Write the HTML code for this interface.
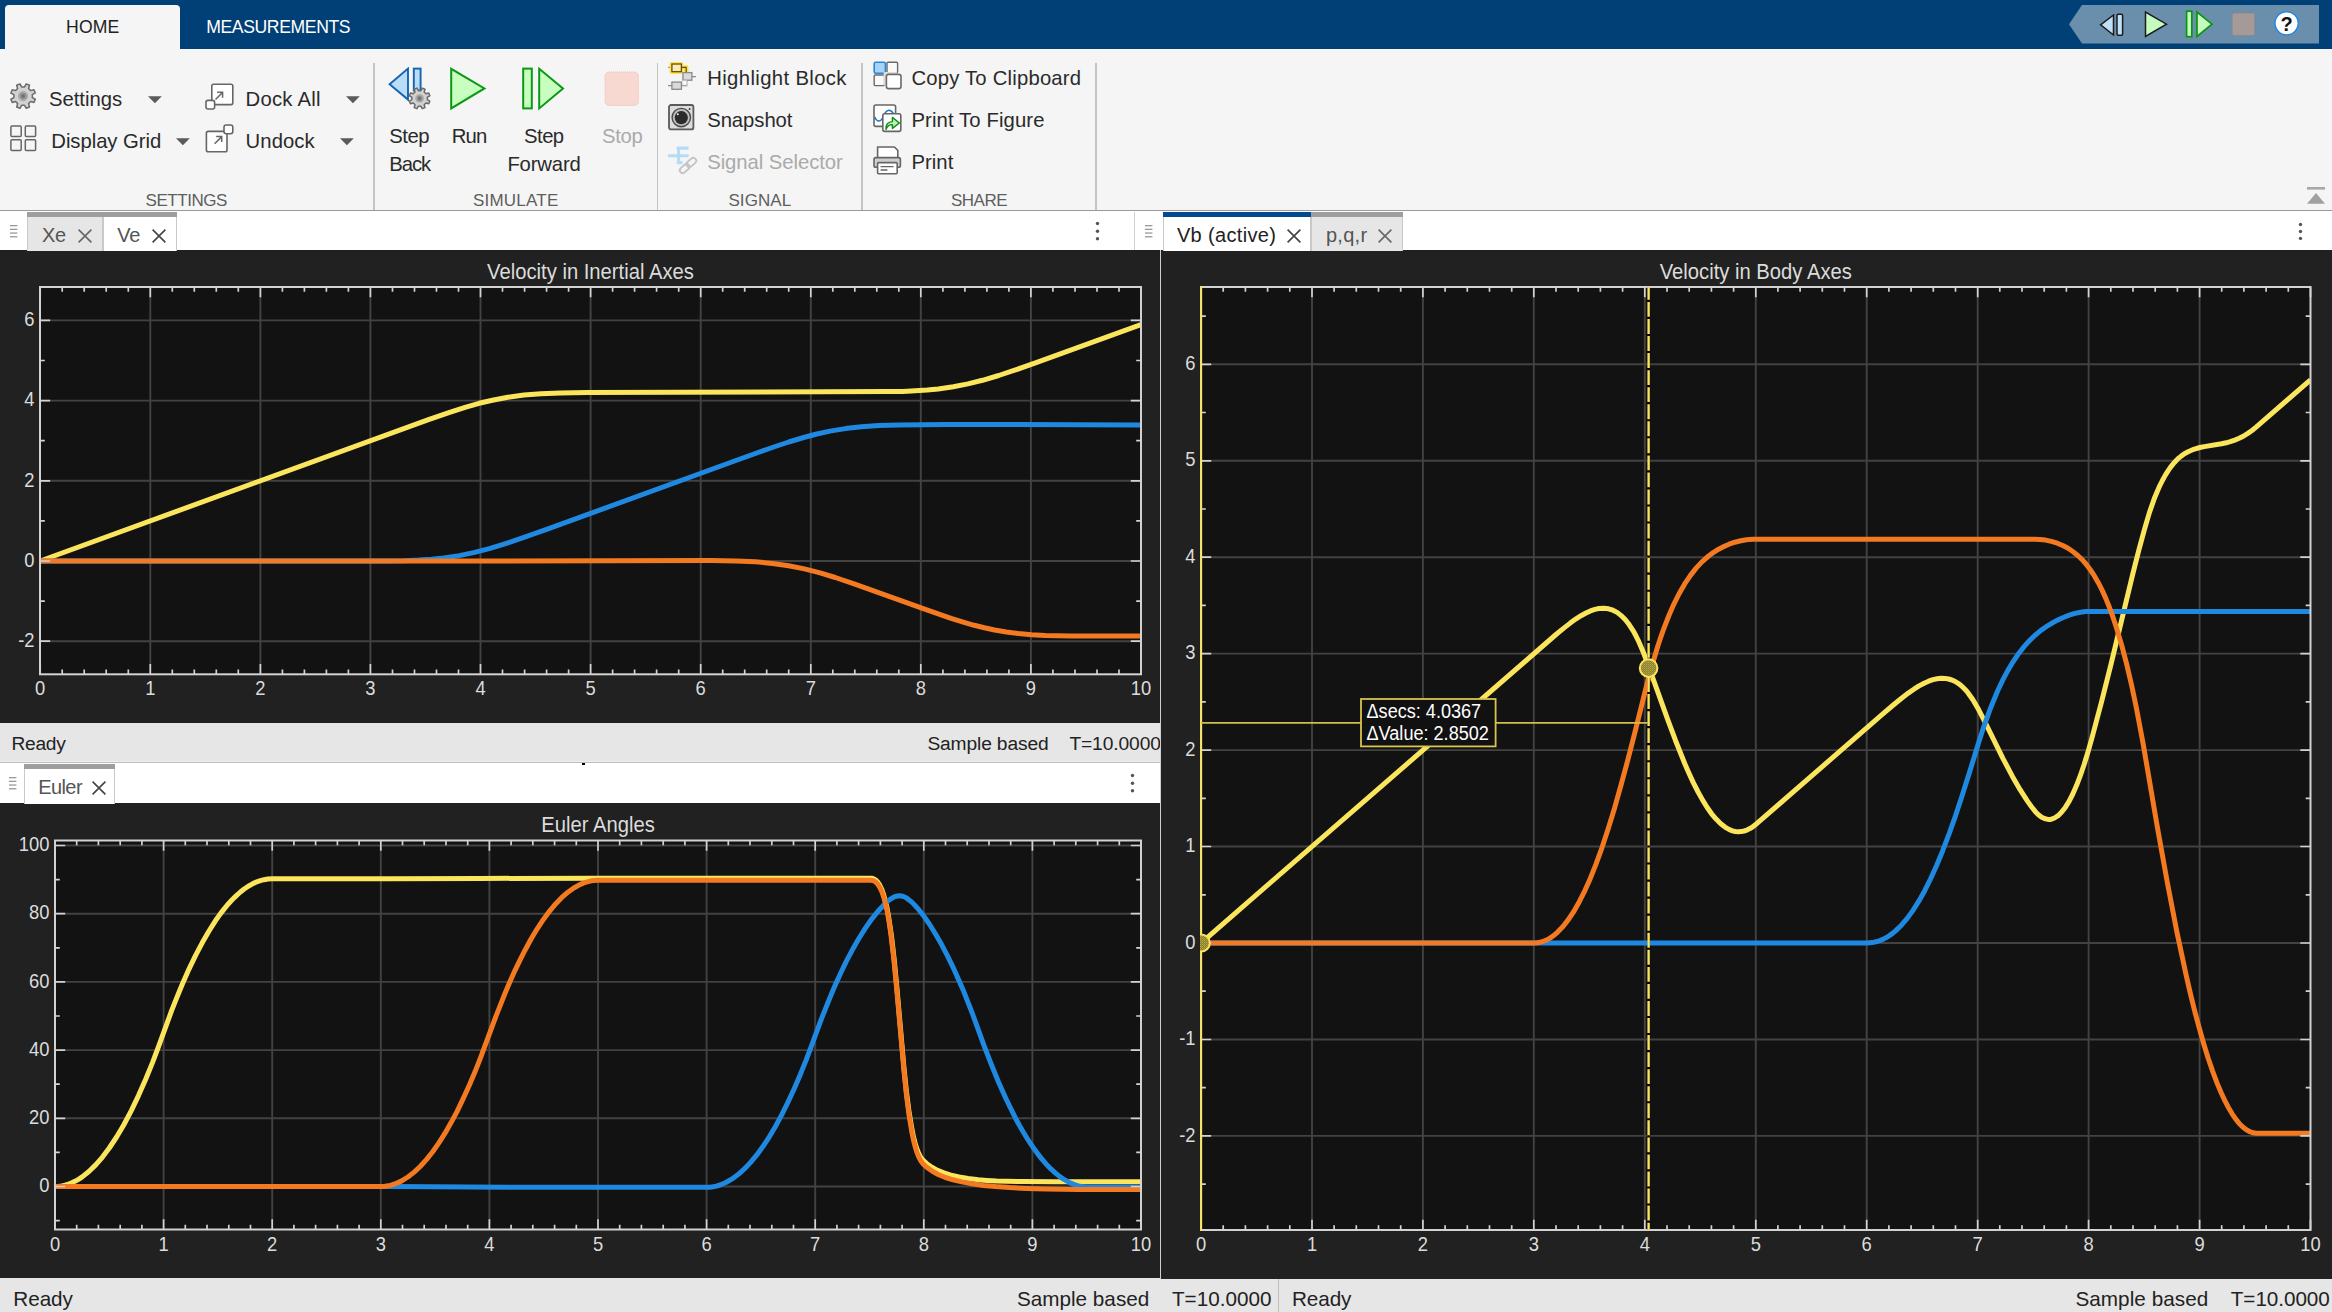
<!DOCTYPE html>
<html><head><meta charset="utf-8"><title>Scope</title><style>
html,body{margin:0;padding:0;background:#212121;}
body{width:2332px;height:1312px;position:relative;overflow:hidden;font-family:"Liberation Sans",sans-serif;}
.b{position:absolute;display:block;}
.t{position:absolute;white-space:nowrap;font-family:"Liberation Sans",sans-serif;}
svg text{font-family:"Liberation Sans",sans-serif;}
</style></head><body>
<div class="b" style="left:0px;top:0px;width:2332px;height:49px;background:#004076;"></div>
<div class="b" style="left:0px;top:49px;width:2332px;height:161.5px;background:#f5f5f5;"></div>
<div class="b" style="left:0px;top:210px;width:2332px;height:1.3px;background:#979797;"></div>
<div class="b" style="left:5px;top:5px;width:175px;height:45px;background:#f5f5f5;border-radius:4px 4px 0 0;"></div>
<div class="t " style="left:66.0px;top:19.4px;font-size:17.6px;line-height:17.6px;color:#222;letter-spacing:0.17px;">HOME</div>
<div class="t " style="left:206.2px;top:19.4px;font-size:17.6px;line-height:17.6px;color:#fff;letter-spacing:-0.38px;">MEASUREMENTS</div>
<svg class="b" style="left:2069px;top:5px;" width="250" height="39" viewBox="0 0 250 39"><path d="M13,0 H250 V38.6 H13 L0,19.3 Z" fill="#6a8fad"/>
<path d="M31.6,19.8 L44.5,10 V30 Z" fill="#bfe0f7" stroke="#1c1c1c" stroke-width="1.5" stroke-linejoin="miter"/>
<rect x="48" y="9.3" width="5.6" height="21" rx="1.2" fill="#bfe0f7" stroke="#1c1c1c" stroke-width="1.5"/>
<path d="M76.5,7 V31.5 L97.5,19.2 Z" fill="#c6fbc0" stroke="#1c1c1c" stroke-width="1.5"/>
<rect x="117.6" y="6.2" width="5.2" height="25.5" fill="#c6fbc0" stroke="#0a9410" stroke-width="1.7"/>
<path d="M128,7 V31.5 L143,19.2 Z" fill="#c6fbc0" stroke="#0a9410" stroke-width="1.7"/>
<rect x="163.2" y="8" width="22.5" height="22.5" rx="2" fill="#a59a97" stroke="#8a7f86" stroke-width="1" stroke-dasharray="1 1"/>
<circle cx="217.6" cy="18.3" r="11.6" fill="#fff" stroke="#1e88e5" stroke-width="1.4"/>
<text x="217.6" y="25.6" font-size="20" font-weight="bold" text-anchor="middle" fill="#111">?</text></svg>
<div class="b" style="left:373.25px;top:63px;width:1.5px;height:147px;background:#c4c4c4;"></div>
<div class="b" style="left:656.55px;top:63px;width:1.5px;height:147px;background:#c4c4c4;"></div>
<div class="b" style="left:861.25px;top:63px;width:1.5px;height:147px;background:#c4c4c4;"></div>
<div class="b" style="left:1095.05px;top:63px;width:1.5px;height:147px;background:#c4c4c4;"></div>
<div class="t " style="left:48.9px;top:88.6px;font-size:20.3px;line-height:20.3px;color:#2a2a2a;letter-spacing:-0.01px;">Settings</div>
<div class="t " style="left:51.3px;top:131.0px;font-size:20.3px;line-height:20.3px;color:#2a2a2a;letter-spacing:-0.05px;">Display Grid</div>
<div class="t " style="left:245.6px;top:88.6px;font-size:20.3px;line-height:20.3px;color:#2a2a2a;letter-spacing:0.22px;">Dock All</div>
<div class="t " style="left:245.6px;top:131.0px;font-size:20.3px;line-height:20.3px;color:#2a2a2a;letter-spacing:0.06px;">Undock</div>
<div class="t " style="left:145.5px;top:191.6px;font-size:17px;line-height:17px;color:#5e5e5e;letter-spacing:-0.44px;">SETTINGS</div>
<div class="t " style="left:389.3px;top:125.8px;font-size:20.3px;line-height:20.3px;color:#2a2a2a;letter-spacing:-0.46px;">Step</div>
<div class="t " style="left:389.3px;top:153.9px;font-size:20.3px;line-height:20.3px;color:#2a2a2a;letter-spacing:-1.06px;">Back</div>
<div class="t " style="left:451.7px;top:125.8px;font-size:20.3px;line-height:20.3px;color:#2a2a2a;letter-spacing:-0.85px;">Run</div>
<div class="t " style="left:524.1px;top:125.8px;font-size:20.3px;line-height:20.3px;color:#2a2a2a;letter-spacing:-0.56px;">Step</div>
<div class="t " style="left:507.4px;top:153.9px;font-size:20.3px;line-height:20.3px;color:#2a2a2a;letter-spacing:-0.16px;">Forward</div>
<div class="t " style="left:602.0px;top:125.8px;font-size:20.3px;line-height:20.3px;color:#aaa;letter-spacing:-0.31px;">Stop</div>
<div class="t " style="left:472.9px;top:191.6px;font-size:17px;line-height:17px;color:#5e5e5e;letter-spacing:0.23px;">SIMULATE</div>
<div class="t " style="left:707.2px;top:67.6px;font-size:20.3px;line-height:20.3px;color:#2a2a2a;letter-spacing:0.37px;">Highlight Block</div>
<div class="t " style="left:707.2px;top:109.7px;font-size:20.3px;line-height:20.3px;color:#2a2a2a;letter-spacing:-0.06px;">Snapshot</div>
<div class="t " style="left:707.2px;top:151.7px;font-size:20.3px;line-height:20.3px;color:#aaa;letter-spacing:-0.06px;">Signal Selector</div>
<div class="t " style="left:728.4px;top:191.6px;font-size:17px;line-height:17px;color:#5e5e5e;letter-spacing:0.09px;">SIGNAL</div>
<div class="t " style="left:911.4px;top:67.6px;font-size:20.3px;line-height:20.3px;color:#2a2a2a;letter-spacing:0.20px;">Copy To Clipboard</div>
<div class="t " style="left:911.4px;top:109.7px;font-size:20.3px;line-height:20.3px;color:#2a2a2a;letter-spacing:0.11px;">Print To Figure</div>
<div class="t " style="left:911.4px;top:151.7px;font-size:20.3px;line-height:20.3px;color:#2a2a2a;letter-spacing:0.05px;">Print</div>
<div class="t " style="left:951.0px;top:191.6px;font-size:17px;line-height:17px;color:#5e5e5e;letter-spacing:-0.51px;">SHARE</div>
<svg class="b" style="left:148px;top:96px;" width="14" height="8" viewBox="0 0 14 8"><path d="M0,0.3 H13.8 L6.9,7.3 Z" fill="#5a5a5a"/></svg>
<svg class="b" style="left:176.2px;top:138.2px;" width="14" height="8" viewBox="0 0 14 8"><path d="M0,0.3 H13.8 L6.9,7.3 Z" fill="#5a5a5a"/></svg>
<svg class="b" style="left:346.2px;top:96px;" width="14" height="8" viewBox="0 0 14 8"><path d="M0,0.3 H13.8 L6.9,7.3 Z" fill="#5a5a5a"/></svg>
<svg class="b" style="left:340.2px;top:138.2px;" width="14" height="8" viewBox="0 0 14 8"><path d="M0,0.3 H13.8 L6.9,7.3 Z" fill="#5a5a5a"/></svg>
<svg class="b" style="left:8px;top:81px;" width="30" height="30" viewBox="0 0 30 30"><path d="M24.17,12.92 L27.57,13.32 L27.57,16.88 L24.17,17.28 L23.05,19.97 L25.18,22.67 L22.67,25.18 L19.97,23.05 L17.28,24.17 L16.88,27.57 L13.32,27.57 L12.92,24.17 L10.23,23.05 L7.53,25.18 L5.02,22.67 L7.15,19.97 L6.03,17.28 L2.63,16.88 L2.63,13.32 L6.03,12.92 L7.15,10.23 L5.02,7.53 L7.53,5.02 L10.23,7.15 L12.92,6.03 L13.32,2.63 L16.88,2.63 L17.28,6.03 L19.97,7.15 L22.67,5.02 L25.18,7.53 L23.05,10.23Z" fill="#d2d2d2" stroke="#6b6b6b" stroke-width="1.5" stroke-linejoin="round" transform="rotate(22.5 15.1 15.1)"/><circle cx="15.1" cy="15.1" r="5.29" fill="#b0b0b0"/><circle cx="15.1" cy="15.1" r="3.40" fill="#8e8e8e"/><circle cx="15.1" cy="15.1" r="1.64" fill="#6e6e6e"/></svg>
<svg class="b" style="left:8px;top:123px;" width="32" height="32" viewBox="0 0 32 32"><rect x="2.9000000000000004" y="2.9000000000000057" width="10.3" height="10.6" rx="1" fill="none" stroke="#666" stroke-width="1.5"/><rect x="2.9000000000000004" y="16.80000000000001" width="10.3" height="10.6" rx="1" fill="none" stroke="#666" stroke-width="1.5"/><rect x="17.3" y="2.9000000000000057" width="10.3" height="10.6" rx="1" fill="none" stroke="#666" stroke-width="1.5"/><rect x="17.3" y="16.80000000000001" width="10.3" height="10.6" rx="1" fill="none" stroke="#666" stroke-width="1.5"/></svg>
<svg class="b" style="left:205px;top:82px;" width="32" height="30" viewBox="0 0 32 30"><rect x="6.8" y="2.3" width="21" height="20.3" rx="1.8" fill="#fff" stroke="#666" stroke-width="1.6"/>
<rect x="1" y="18.4" width="8.6" height="8.6" rx="2" fill="#fff" stroke="#666" stroke-width="1.6"/>
<path d="M10.5,17.5 L17.2,10.8 M12.2,10.3 H17.6 V15.8" fill="none" stroke="#666" stroke-width="1.5"/></svg>
<svg class="b" style="left:205px;top:124px;" width="32" height="30" viewBox="0 0 32 30"><rect x="1.4" y="7.4" width="20.6" height="20.3" rx="1.8" fill="#fff" stroke="#666" stroke-width="1.6"/>
<rect x="19" y="1" width="8.8" height="8.8" rx="2.2" fill="#fff" stroke="#666" stroke-width="1.6"/>
<path d="M9.6,19.8 L16.3,13.1 M11.2,12.6 H16.7 V18.1" fill="none" stroke="#666" stroke-width="1.5"/></svg>
<svg class="b" style="left:388px;top:67px;" width="46" height="46" viewBox="0 0 46 46"><path d="M1.6,17.3 L20,1.6 V32.6 Z" fill="#b9ddf6" stroke="#1663b3" stroke-width="1.9" stroke-linejoin="miter"/>
<rect x="25.8" y="1.6" width="6.8" height="22" fill="#b9ddf6" stroke="#1663b3" stroke-width="1.9"/><path d="M39.23,29.57 L42.09,29.91 L42.09,32.89 L39.23,33.23 L38.29,35.50 L40.08,37.76 L37.96,39.88 L35.70,38.09 L33.43,39.03 L33.09,41.89 L30.11,41.89 L29.77,39.03 L27.50,38.09 L25.24,39.88 L23.12,37.76 L24.91,35.50 L23.97,33.23 L21.11,32.89 L21.11,29.91 L23.97,29.57 L24.91,27.30 L23.12,25.04 L25.24,22.92 L27.50,24.71 L29.77,23.77 L30.11,20.91 L33.09,20.91 L33.43,23.77 L35.70,24.71 L37.96,22.92 L40.08,25.04 L38.29,27.30Z" fill="#d2d2d2" stroke="#6b6b6b" stroke-width="1.5" stroke-linejoin="round" transform="rotate(22.5 31.6 31.4)"/><circle cx="31.6" cy="31.4" r="4.45" fill="#b0b0b0"/><circle cx="31.6" cy="31.4" r="2.86" fill="#8e8e8e"/><circle cx="31.6" cy="31.4" r="1.38" fill="#6e6e6e"/></svg>
<svg class="b" style="left:450.3px;top:67px;" width="38" height="44" viewBox="0 0 38 44"><path d="M1.2,1.8 V41.4 L34.4,21.4 Z" fill="#c8ffc1" stroke="#0b9913" stroke-width="2" stroke-linejoin="miter"/></svg>
<svg class="b" style="left:522px;top:67px;" width="44" height="44" viewBox="0 0 44 44"><rect x="1.2" y="1.6" width="8.6" height="39.8" fill="#c8ffc1" stroke="#0b9913" stroke-width="2"/>
<path d="M17.2,1.8 V41.4 L41,21.4 Z" fill="#c8ffc1" stroke="#0b9913" stroke-width="2" stroke-linejoin="miter"/></svg>
<svg class="b" style="left:604.3px;top:71.4px;" width="36" height="36" viewBox="0 0 36 36"><rect x="1" y="1" width="33.4" height="33.4" rx="4" fill="#f8d9d1" stroke="#e8bfae" stroke-width="1" stroke-dasharray="1 1"/></svg>
<svg class="b" style="left:667px;top:61px;" width="31" height="31" viewBox="0 0 31 31"><path d="M1.1,6.4 H5 M1.1,24.7 H5 M24.9,15.7 H29 M14.4,24.7 H19.7 V19.2" fill="none" stroke="#8a8a8a" stroke-width="1.3"/>
<rect x="2.5" y="1.1" width="13.8" height="11.9" rx="2" fill="#fbe44d"/>
<path d="M14.4,6.4 H19.2 V11.4" fill="none" stroke="#fbe44d" stroke-width="4.6" stroke-linejoin="round" stroke-linecap="round"/>
<path d="M14.4,6.4 H19.2 V11.6" fill="none" stroke="#6b4a12" stroke-width="1.2"/>
<rect x="4.9" y="3" width="9.5" height="7.7" fill="#f5eeb0" stroke="#6b4a12" stroke-width="1.3"/>
<rect x="15.9" y="11.6" width="9" height="7.6" fill="#dadada" stroke="#8a8a8a" stroke-width="1.3"/>
<rect x="4.9" y="21.1" width="9.5" height="7.2" fill="#dadada" stroke="#8a8a8a" stroke-width="1.3"/>
<rect x="15.8" y="19.8" width="3.9" height="4.2" fill="#fff" stroke="#d5d5d5" stroke-width="0.8"/></svg>
<svg class="b" style="left:668px;top:104px;" width="27" height="27" viewBox="0 0 27 27"><rect x="1" y="1" width="24.4" height="24.4" rx="2" fill="#dcdcdc" stroke="#5a5a5a" stroke-width="1.8"/>
<circle cx="13.3" cy="13.6" r="9.2" fill="#bdbdbd" stroke="#4a4a4a" stroke-width="1.4"/>
<circle cx="13.3" cy="13.6" r="6.6" fill="#2b2b2b"/>
<circle cx="9.8" cy="10.2" r="1" fill="#eee"/>
<circle cx="21.6" cy="5" r="0.9" fill="#333"/></svg>
<svg class="b" style="left:667px;top:145.5px;" width="31" height="30" viewBox="0 0 31 30"><path d="M9.7,2.1 H21.6 M1.1,9.7 H21.6 M9.7,16.6 H15.4 M11.6,0.9 V17.6" fill="none" stroke="#b5dcf5" stroke-width="3.1"/>
<g transform="rotate(-42 21 19.5)" fill="none" stroke="#c4c4c4" stroke-width="1.9">
<rect x="11" y="16.6" width="11" height="5.8" rx="2.9"/>
<rect x="20" y="16.6" width="11" height="5.8" rx="2.9"/>
</g></svg>
<svg class="b" style="left:872.8px;top:61.4px;" width="30" height="30" viewBox="0 0 30 30"><rect x="1.2" y="1.2" width="11.2" height="11" rx="1.5" fill="#a9d3f3" stroke="#2b87db" stroke-width="1.6"/>
<rect x="14" y="1.2" width="10.6" height="10.6" rx="1" fill="#fafafa" stroke="#6a6a6a" stroke-width="1.4"/>
<rect x="1.2" y="14" width="10.4" height="10.6" rx="1" fill="#fafafa" stroke="#6a6a6a" stroke-width="1.4"/>
<rect x="10.6" y="11" width="13.6" height="13.6" rx="1" fill="#dcdcdc"/>
<rect x="13.4" y="13.4" width="14.6" height="14.2" rx="2.2" fill="#fff" stroke="#6a6a6a" stroke-width="1.6"/></svg>
<svg class="b" style="left:873.2px;top:104.2px;" width="30" height="30" viewBox="0 0 30 30"><rect x="1" y="1" width="21.6" height="21.4" rx="1.8" fill="#fff" stroke="#666" stroke-width="1.6"/>
<path d="M1.8,13 C4,18.5 8,18.5 10.5,12 S17,4.5 20.5,9.5" fill="none" stroke="#1e73c8" stroke-width="1.5"/>
<rect x="9.8" y="9.8" width="18" height="17.6" rx="1.8" fill="#fff" stroke="#666" stroke-width="1.6"/>
<path d="M13,25.5 C12.6,20.5 15,17.8 19.4,17.6 V13.4 L26.4,19 L19.4,24.4 V20.6 C16.2,20.6 14.2,22.4 13,25.5 Z" fill="#bdf3b4" stroke="#108a16" stroke-width="1.4" stroke-linejoin="round"/></svg>
<svg class="b" style="left:873.2px;top:146.1px;" width="30" height="30" viewBox="0 0 30 30"><path d="M4.6,12 V1 H21.4 L24.8,4.4 V12" fill="#fff" stroke="#666" stroke-width="1.6" stroke-linejoin="round"/>
<rect x="1" y="11.6" width="26.4" height="9.6" rx="1.8" fill="#cfcfcf" stroke="#666" stroke-width="1.6"/>
<rect x="4.6" y="16.6" width="19.6" height="11.2" rx="1" fill="#fff" stroke="#666" stroke-width="1.6"/>
<path d="M7.6,20.6 H20.6 M7.6,24 H14.4" stroke="#666" stroke-width="1.3"/></svg>
<svg class="b" style="left:2306.7px;top:187.3px;" width="18" height="17" viewBox="0 0 18 17"><rect x="0" y="0" width="18" height="2.6" fill="#a8a8a8"/><path d="M9,6 L18,16.8 H0 Z" fill="#a0a0a0"/></svg>
<div class="b" style="left:0px;top:210.5px;width:2332px;height:39.5px;background:#fff;"></div>
<div class="b" style="left:0px;top:210px;width:2332px;height:1.3px;background:#9a9a9a;"></div>
<svg class="b" style="left:10.3px;top:225.4px;" width="8" height="13" viewBox="0 0 8 13"><rect x="0" y="0.0" width="7.4" height="1.3" fill="#9a9a9a"/><rect x="0" y="3.7" width="7.4" height="1.3" fill="#9a9a9a"/><rect x="0" y="7.4" width="7.4" height="1.3" fill="#9a9a9a"/><rect x="0" y="11.1" width="7.4" height="1.3" fill="#9a9a9a"/></svg>
<div class="b" style="left:26.6px;top:212.3px;width:76.0px;height:38.89999999999998px;background:#e6e6e6;border-left:1px solid #c9c9c9;border-right:1px solid #c9c9c9;box-sizing:border-box;"></div>
<div class="b" style="left:26.6px;top:212.3px;width:76.0px;height:4.6px;background:#a09d9d;"></div>
<div class="t " style="left:42.0px;top:225.2px;font-size:20px;line-height:20px;color:#555;letter-spacing:-0.23px;">Xe</div>
<svg class="b" style="left:78px;top:229.3px;" width="14.4" height="14.4" viewBox="0 0 14.4 14.4"><path d="M0.6,0.6 L13.4,13.4 M13.4,0.6 L0.6,13.4" stroke="#666" stroke-width="1.6" fill="none"/></svg>
<div class="b" style="left:102.6px;top:212.3px;width:74.1px;height:38.89999999999998px;background:#fff;border-left:1px solid #c9c9c9;border-right:1px solid #c9c9c9;box-sizing:border-box;"></div>
<div class="b" style="left:102.6px;top:212.3px;width:74.1px;height:4.6px;background:#a09d9d;"></div>
<div class="t " style="left:117.2px;top:225.2px;font-size:20px;line-height:20px;color:#555;letter-spacing:-0.13px;">Ve</div>
<svg class="b" style="left:151.6px;top:229.3px;" width="14.4" height="14.4" viewBox="0 0 14.4 14.4"><path d="M0.6,0.6 L13.4,13.4 M13.4,0.6 L0.6,13.4" stroke="#444" stroke-width="1.6" fill="none"/></svg>
<svg class="b" style="left:1094.7px;top:221.2px;" width="5" height="20.200000000000017" viewBox="0 0 5 20.200000000000017"><circle cx="2.5" cy="2.5" r="1.7" fill="#555"/><circle cx="2.5" cy="10.2" r="1.7" fill="#555"/><circle cx="2.5" cy="17.7" r="1.7" fill="#555"/></svg>
<div class="b" style="left:1134px;top:212px;width:1px;height:38px;background:#d0d0d0;"></div>
<svg class="b" style="left:1145.2px;top:225.4px;" width="8" height="13" viewBox="0 0 8 13"><rect x="0" y="0.0" width="7.4" height="1.3" fill="#9a9a9a"/><rect x="0" y="3.7" width="7.4" height="1.3" fill="#9a9a9a"/><rect x="0" y="7.4" width="7.4" height="1.3" fill="#9a9a9a"/><rect x="0" y="11.1" width="7.4" height="1.3" fill="#9a9a9a"/></svg>
<div class="b" style="left:1162.9px;top:212.3px;width:148.0999999999999px;height:39.099999999999994px;background:#fff;border-left:1px solid #c9c9c9;border-right:1px solid #c9c9c9;box-sizing:border-box;"></div>
<div class="b" style="left:1162.9px;top:212.3px;width:148.0999999999999px;height:4.6px;background:#004a8f;"></div>
<div class="t " style="left:1176.9px;top:225.2px;font-size:20px;line-height:20px;color:#222;letter-spacing:0.35px;">Vb (active)</div>
<svg class="b" style="left:1286.8px;top:229.3px;" width="14.4" height="14.4" viewBox="0 0 14.4 14.4"><path d="M0.6,0.6 L13.4,13.4 M13.4,0.6 L0.6,13.4" stroke="#444" stroke-width="1.6" fill="none"/></svg>
<div class="b" style="left:1311px;top:212.3px;width:91.5px;height:39.099999999999994px;background:#e6e6e6;border-left:1px solid #c9c9c9;border-right:1px solid #c9c9c9;box-sizing:border-box;"></div>
<div class="b" style="left:1311px;top:212.3px;width:91.5px;height:4.6px;background:#a09d9d;"></div>
<div class="t " style="left:1325.9px;top:225.2px;font-size:20px;line-height:20px;color:#555;letter-spacing:0.31px;">p,q,r</div>
<svg class="b" style="left:1377.8px;top:229.3px;" width="14.4" height="14.4" viewBox="0 0 14.4 14.4"><path d="M0.6,0.6 L13.4,13.4 M13.4,0.6 L0.6,13.4" stroke="#666" stroke-width="1.6" fill="none"/></svg>
<svg class="b" style="left:2297.8px;top:222.0px;" width="5" height="18.900000000000006" viewBox="0 0 5 18.900000000000006"><circle cx="2.5" cy="2.5" r="1.7" fill="#555"/><circle cx="2.5" cy="9.5" r="1.7" fill="#555"/><circle cx="2.5" cy="16.4" r="1.7" fill="#555"/></svg>
<div class="b" style="left:0px;top:722.5px;width:1160px;height:39.5px;background:#e6e6e6;"></div>
<div class="b" style="left:0px;top:761.3px;width:1160px;height:0.8px;background:#f0f0f0;"></div>
<div class="b" style="left:0px;top:762px;width:1160px;height:1px;background:#bcbcbc;"></div>
<div class="t " style="left:11.4px;top:734.1px;font-size:19.2px;line-height:19.2px;color:#222;letter-spacing:-0.24px;">Ready</div>
<div class="t " style="left:927.4px;top:734.1px;font-size:19.2px;line-height:19.2px;color:#222;letter-spacing:-0.13px;">Sample based</div>
<div class="b" style="left:1060px;top:722.5px;width:100px;height:39px;overflow:hidden"></div>
<div class="b" style="left:1060px;top:722.5px;width:100px;height:39px;overflow:hidden"><div class="t" style="left:9.4px;top:11.6px;font-size:19.2px;line-height:19.2px;color:#222;letter-spacing:-0.1px">T=10.0000</div></div>
<div class="b" style="left:0px;top:763px;width:1160px;height:39.5px;background:#fff;"></div>
<div class="b" style="left:582px;top:763px;width:3px;height:2px;background:#000;"></div>
<svg class="b" style="left:9.3px;top:777.4px;" width="8" height="13" viewBox="0 0 8 13"><rect x="0" y="0.0" width="7.4" height="1.3" fill="#9a9a9a"/><rect x="0" y="3.7" width="7.4" height="1.3" fill="#9a9a9a"/><rect x="0" y="7.4" width="7.4" height="1.3" fill="#9a9a9a"/><rect x="0" y="11.1" width="7.4" height="1.3" fill="#9a9a9a"/></svg>
<div class="b" style="left:24.2px;top:764.2px;width:90.6px;height:39.39999999999998px;background:#fff;border-left:1px solid #c9c9c9;border-right:1px solid #c9c9c9;box-sizing:border-box;"></div>
<div class="b" style="left:24.2px;top:764.2px;width:90.6px;height:4.6px;background:#a09d9d;"></div>
<div class="t " style="left:38.2px;top:777.1px;font-size:20px;line-height:20px;color:#555;letter-spacing:-0.58px;">Euler</div>
<svg class="b" style="left:91.7px;top:781.2px;" width="14.4" height="14.4" viewBox="0 0 14.4 14.4"><path d="M0.6,0.6 L13.4,13.4 M13.4,0.6 L0.6,13.4" stroke="#444" stroke-width="1.6" fill="none"/></svg>
<svg class="b" style="left:1129.5px;top:772.8px;" width="5" height="20.300000000000068" viewBox="0 0 5 20.300000000000068"><circle cx="2.5" cy="2.5" r="1.7" fill="#555"/><circle cx="2.5" cy="10.2" r="1.7" fill="#555"/><circle cx="2.5" cy="17.8" r="1.7" fill="#555"/></svg>
<div class="b" style="left:0px;top:1277.6px;width:1161px;height:34.4px;background:#e6e6e6;"></div>
<div class="b" style="left:1161px;top:1278.8px;width:1171px;height:33.2px;background:#e6e6e6;"></div>
<div class="b" style="left:1277.6px;top:1279px;width:1px;height:33px;background:#bdbdbd;"></div>
<div class="t " style="left:13.3px;top:1288.8px;font-size:20.7px;line-height:20.7px;color:#222;letter-spacing:-0.05px;">Ready</div>
<div class="t " style="left:1016.9px;top:1288.8px;font-size:20.7px;line-height:20.7px;color:#222;letter-spacing:0.01px;">Sample based</div>
<div class="t " style="left:1171.9px;top:1288.8px;font-size:20.7px;line-height:20.7px;color:#222;letter-spacing:0.02px;">T=10.0000</div>
<div class="t " style="left:1292.0px;top:1288.8px;font-size:20.7px;line-height:20.7px;color:#222;letter-spacing:-0.09px;">Ready</div>
<div class="t " style="left:2075.4px;top:1288.8px;font-size:20.7px;line-height:20.7px;color:#222;letter-spacing:0.05px;">Sample based</div>
<div class="t " style="left:2230.8px;top:1288.8px;font-size:20.7px;line-height:20.7px;color:#222;letter-spacing:-0.06px;">T=10.0000</div>
<div class="b" style="left:1160px;top:250px;width:1px;height:1029px;background:#cfcfcf;"></div>
<svg class="b" style="left:0;top:250px" width="1160" height="472.5" viewBox="0 250 1160 472.5"><rect x="40" y="287" width="1101" height="387.29999999999995" fill="#121212"/><path d="M150.3,287V674.3M260.4,287V674.3M370.4,287V674.3M480.5,287V674.3M590.6,287V674.3M700.7,287V674.3M810.8,287V674.3M920.8,287V674.3M1030.9,287V674.3M40,320.4H1141M40,400.6H1141M40,480.8H1141M40,561.0H1141M40,641.2H1141" stroke="#424242" stroke-width="1.9" fill="none"/><clipPath id="c40_287"><rect x="40" y="287" width="1101" height="387.29999999999995"/></clipPath><clipPath id="c40_287m"><rect x="39" y="286" width="1103" height="389.29999999999995"/></clipPath><g clip-path="url(#c40_287)"><path d="M40.2,561.0 428.5,419.6 448.9,412.6 465.1,407.3 479.1,403.3 492.4,400.2 507.8,397.3 524.0,395.1 541.1,393.7 560.3,392.9 587.3,392.6 888.4,391.6 902.7,391.4 915.3,390.8 927.2,390.0 938.2,388.9 953.3,386.8 967.9,383.9 982.5,380.3 998.7,375.5 1014.7,370.2 1034.8,363.1 1141.0,324.5" stroke="#fbe55c" stroke-width="5.0" fill="none" stroke-linejoin="round"/><path d="M40.2,561.0 388.3,561.0 404.6,560.7 418.6,560.1 431.5,559.2 443.6,558.0 459.3,555.6 474.7,552.4 490.2,548.4 508.0,542.8 524.6,537.2 546.6,529.4 737.3,460.0 770.9,448.0 788.7,442.0 803.6,437.5 816.8,434.0 830.0,431.1 845.4,428.6 861.4,426.8 878.7,425.6 898.8,425.0 945.3,424.5 996.2,424.4 1141.0,425.1" stroke="#1f88e0" stroke-width="5.0" fill="none" stroke-linejoin="round"/><path d="M40.2,561.0 446.7,561.0 711.4,560.6 735.9,560.9 755.4,561.8 772.5,563.4 788.7,565.7 804.4,568.9 820.1,572.9 835.3,577.5 853.4,583.6 926.1,609.7 951.1,618.3 963.2,622.1 974.2,625.3 984.4,627.8 994.6,630.0 1006.4,632.0 1018.5,633.6 1031.5,634.8 1045.2,635.5 1071.4,636.1 1141.0,636.0" stroke="#f47a21" stroke-width="5.0" fill="none" stroke-linejoin="round"/></g><path d="M40.2,287v10.2M40.2,674.3v-10.2M62.2,287v4.8M62.2,674.3v-4.8M84.2,287v4.8M84.2,674.3v-4.8M106.2,287v4.8M106.2,674.3v-4.8M128.3,287v4.8M128.3,674.3v-4.8M150.3,287v10.2M150.3,674.3v-10.2M172.3,287v4.8M172.3,674.3v-4.8M194.3,287v4.8M194.3,674.3v-4.8M216.3,287v4.8M216.3,674.3v-4.8M238.3,287v4.8M238.3,674.3v-4.8M260.4,287v10.2M260.4,674.3v-10.2M282.4,287v4.8M282.4,674.3v-4.8M304.4,287v4.8M304.4,674.3v-4.8M326.4,287v4.8M326.4,674.3v-4.8M348.4,287v4.8M348.4,674.3v-4.8M370.4,287v10.2M370.4,674.3v-10.2M392.5,287v4.8M392.5,674.3v-4.8M414.5,287v4.8M414.5,674.3v-4.8M436.5,287v4.8M436.5,674.3v-4.8M458.5,287v4.8M458.5,674.3v-4.8M480.5,287v10.2M480.5,674.3v-10.2M502.5,287v4.8M502.5,674.3v-4.8M524.6,287v4.8M524.6,674.3v-4.8M546.6,287v4.8M546.6,674.3v-4.8M568.6,287v4.8M568.6,674.3v-4.8M590.6,287v10.2M590.6,674.3v-10.2M612.6,287v4.8M612.6,674.3v-4.8M634.6,287v4.8M634.6,674.3v-4.8M656.6,287v4.8M656.6,674.3v-4.8M678.7,287v4.8M678.7,674.3v-4.8M700.7,287v10.2M700.7,674.3v-10.2M722.7,287v4.8M722.7,674.3v-4.8M744.7,287v4.8M744.7,674.3v-4.8M766.7,287v4.8M766.7,674.3v-4.8M788.7,287v4.8M788.7,674.3v-4.8M810.8,287v10.2M810.8,674.3v-10.2M832.8,287v4.8M832.8,674.3v-4.8M854.8,287v4.8M854.8,674.3v-4.8M876.8,287v4.8M876.8,674.3v-4.8M898.8,287v4.8M898.8,674.3v-4.8M920.8,287v10.2M920.8,674.3v-10.2M942.9,287v4.8M942.9,674.3v-4.8M964.9,287v4.8M964.9,674.3v-4.8M986.9,287v4.8M986.9,674.3v-4.8M1008.9,287v4.8M1008.9,674.3v-4.8M1030.9,287v10.2M1030.9,674.3v-10.2M1052.9,287v4.8M1052.9,674.3v-4.8M1075.0,287v4.8M1075.0,674.3v-4.8M1097.0,287v4.8M1097.0,674.3v-4.8M1119.0,287v4.8M1119.0,674.3v-4.8M1141.0,287v10.2M1141.0,674.3v-10.2M40,320.4h10.2M1141,320.4h-10.2M40,400.6h10.2M1141,400.6h-10.2M40,480.8h10.2M1141,480.8h-10.2M40,561.0h10.2M1141,561.0h-10.2M40,641.2h10.2M1141,641.2h-10.2M40,360.5h4.8M1141,360.5h-4.8M40,440.7h4.8M1141,440.7h-4.8M40,520.9h4.8M1141,520.9h-4.8M40,601.1h4.8M1141,601.1h-4.8" stroke="#d2d2d2" stroke-width="1.7" fill="none"/><rect x="40" y="287" width="1101" height="387.29999999999995" fill="none" stroke="#d2d2d2" stroke-width="2"/><text transform="translate(40.2,695.3) scale(0.92,1)" font-size="20" text-anchor="middle" fill="#dcdcdc">0</text><text transform="translate(150.3,695.3) scale(0.92,1)" font-size="20" text-anchor="middle" fill="#dcdcdc">1</text><text transform="translate(260.4,695.3) scale(0.92,1)" font-size="20" text-anchor="middle" fill="#dcdcdc">2</text><text transform="translate(370.4,695.3) scale(0.92,1)" font-size="20" text-anchor="middle" fill="#dcdcdc">3</text><text transform="translate(480.5,695.3) scale(0.92,1)" font-size="20" text-anchor="middle" fill="#dcdcdc">4</text><text transform="translate(590.6,695.3) scale(0.92,1)" font-size="20" text-anchor="middle" fill="#dcdcdc">5</text><text transform="translate(700.7,695.3) scale(0.92,1)" font-size="20" text-anchor="middle" fill="#dcdcdc">6</text><text transform="translate(810.8,695.3) scale(0.92,1)" font-size="20" text-anchor="middle" fill="#dcdcdc">7</text><text transform="translate(920.8,695.3) scale(0.92,1)" font-size="20" text-anchor="middle" fill="#dcdcdc">8</text><text transform="translate(1030.9,695.3) scale(0.92,1)" font-size="20" text-anchor="middle" fill="#dcdcdc">9</text><text transform="translate(1141.0,695.3) scale(0.92,1)" font-size="20" text-anchor="middle" fill="#dcdcdc">10</text><text transform="translate(34.5,326.1) scale(0.92,1)" font-size="20" text-anchor="end" fill="#dcdcdc">6</text><text transform="translate(34.5,406.3) scale(0.92,1)" font-size="20" text-anchor="end" fill="#dcdcdc">4</text><text transform="translate(34.5,486.5) scale(0.92,1)" font-size="20" text-anchor="end" fill="#dcdcdc">2</text><text transform="translate(34.5,566.7) scale(0.92,1)" font-size="20" text-anchor="end" fill="#dcdcdc">0</text><text transform="translate(34.5,646.9) scale(0.92,1)" font-size="20" text-anchor="end" fill="#dcdcdc">-2</text><text transform="translate(590.5,278.6) scale(0.92,1)" font-size="22" text-anchor="middle" fill="#dcdcdc">Velocity in Inertial Axes</text></svg>
<svg class="b" style="left:0;top:802.5px" width="1160" height="475" viewBox="0 802.5 1160 475"><rect x="55" y="840" width="1086" height="389" fill="#121212"/><path d="M163.6,840V1229M272.2,840V1229M380.8,840V1229M489.4,840V1229M598.0,840V1229M706.6,840V1229M815.2,840V1229M923.8,840V1229M1032.4,840V1229M55,845.0H1141M55,913.2H1141M55,981.4H1141M55,1049.6H1141M55,1117.8H1141M55,1186.0H1141" stroke="#424242" stroke-width="1.9" fill="none"/><clipPath id="c55_840"><rect x="55" y="840" width="1086" height="389"/></clipPath><clipPath id="c55_840m"><rect x="54" y="839" width="1088" height="391"/></clipPath><g clip-path="url(#c55_840)"><path d="M55.0,1186.0 58.3,1185.9 61.8,1185.4 65.0,1184.7 68.6,1183.6 71.8,1182.3 75.4,1180.6 78.9,1178.6 82.2,1176.4 88.9,1171.0 95.7,1164.4 102.5,1156.6 109.3,1147.5 116.6,1136.5 124.0,1124.0 131.3,1110.1 138.6,1094.8 145.7,1078.7 152.5,1062.1 158.7,1045.7 171.7,1009.9 177.2,996.1 182.6,983.0 189.1,968.3 195.6,954.8 202.2,942.3 208.7,931.0 216.5,918.7 220.3,913.4 224.4,908.1 228.5,903.2 232.6,898.8 236.4,895.1 240.4,891.5 244.2,888.5 248.3,885.7 252.1,883.6 256.2,881.6 260.3,880.2 264.1,879.2 267.9,878.5 271.9,878.3 390.8,878.3 480.4,877.9 593.9,877.8 869.8,877.8 871.7,877.8 873.3,878.2 875.7,879.5 877.9,881.8 879.8,884.7 881.7,888.7 883.6,894.1 885.2,899.8 886.9,906.9 888.5,915.5 891.5,935.6 894.2,959.3 896.9,987.6 904.0,1067.7 906.4,1091.1 908.9,1110.4 911.9,1128.6 913.5,1136.4 915.1,1142.7 916.7,1147.9 918.6,1152.7 920.5,1156.4 922.7,1159.4 926.8,1163.2 931.9,1166.8 937.6,1169.9 943.9,1172.4 950.9,1174.6 959.1,1176.5 968.1,1178.0 978.4,1179.2 986.8,1179.9 996.6,1180.5 1022.4,1181.1 1053.6,1181.3 1141.0,1181.3" stroke="#fbe55c" stroke-width="5.0" fill="none" stroke-linejoin="round"/><path d="M55.0,1186.0 392.5,1186.0 527.1,1186.8 706.6,1186.8 709.9,1186.7 713.1,1186.3 716.4,1185.6 719.9,1184.5 725.9,1182.0 732.1,1178.4 738.4,1173.8 744.6,1168.2 750.6,1161.9 756.8,1154.4 763.1,1145.8 769.3,1136.3 775.6,1125.7 781.8,1114.1 788.0,1101.6 794.3,1088.0 800.0,1074.7 806.0,1059.9 811.1,1046.4 821.7,1017.6 830.7,995.2 836.1,982.6 841.3,971.3 846.4,960.7 851.6,950.8 858.4,938.8 865.2,927.9 871.9,918.3 878.5,910.2 884.7,903.5 887.4,901.0 890.1,898.9 892.6,897.3 895.0,896.1 897.2,895.5 899.4,895.2 901.3,895.4 903.4,896.0 905.3,896.8 907.5,898.2 912.1,901.9 917.6,907.7 923.3,914.9 929.5,923.8 935.7,933.8 942.0,944.8 947.1,954.6 952.6,965.8 957.7,977.1 963.2,989.7 972.4,1013.0 984.6,1046.6 990.9,1062.9 998.5,1081.5 1006.1,1098.5 1015.0,1116.7 1019.6,1125.2 1024.0,1132.7 1028.6,1140.2 1032.9,1146.7 1037.6,1153.1 1041.9,1158.6 1046.5,1163.9 1050.9,1168.4 1055.5,1172.6 1059.8,1176.1 1064.4,1179.2 1068.8,1181.7 1073.1,1183.6 1077.5,1185.1 1082.4,1186.1 1087.2,1186.6 1141.0,1186.6" stroke="#1f88e0" stroke-width="5.0" fill="none" stroke-linejoin="round"/><path d="M55.0,1186.0 381.1,1186.0 384.9,1185.8 388.4,1185.3 391.9,1184.4 395.5,1183.2 401.7,1180.4 407.9,1176.5 414.2,1171.6 420.2,1166.0 426.4,1159.1 432.7,1151.2 438.9,1142.4 444.9,1132.9 451.1,1122.1 457.1,1110.8 463.3,1097.9 469.3,1084.7 475.0,1071.3 480.4,1057.7 495.9,1015.8 504.6,993.8 509.8,981.6 514.9,970.1 520.1,959.3 525.0,949.7 531.2,938.3 537.2,928.3 543.4,918.9 549.4,910.8 555.6,903.4 561.6,897.2 567.9,891.7 573.8,887.5 579.8,884.1 585.5,881.8 591.2,880.3 596.9,879.7 869.8,879.7 872.8,879.9 875.2,881.1 877.6,883.4 879.8,886.8 882.0,891.5 883.9,897.1 885.8,904.3 887.7,913.3 889.3,922.8 890.9,933.9 893.9,959.2 896.6,987.3 904.0,1070.6 906.4,1094.1 908.9,1113.5 911.9,1131.9 913.5,1139.6 915.1,1146.0 917.0,1152.1 918.9,1156.7 920.8,1160.3 923.0,1163.3 927.6,1167.4 932.8,1171.0 938.7,1174.2 945.5,1177.0 953.1,1179.3 961.8,1181.4 972.1,1183.3 983.5,1184.9 995.5,1186.1 1009.9,1187.1 1027.0,1187.9 1046.2,1188.6 1078.8,1189.1 1141.0,1189.1" stroke="#f47a21" stroke-width="5.0" fill="none" stroke-linejoin="round"/></g><path d="M55.0,840v10.2M55.0,1229v-10.2M76.7,840v4.8M76.7,1229v-4.8M98.4,840v4.8M98.4,1229v-4.8M120.2,840v4.8M120.2,1229v-4.8M141.9,840v4.8M141.9,1229v-4.8M163.6,840v10.2M163.6,1229v-10.2M185.3,840v4.8M185.3,1229v-4.8M207.0,840v4.8M207.0,1229v-4.8M228.8,840v4.8M228.8,1229v-4.8M250.5,840v4.8M250.5,1229v-4.8M272.2,840v10.2M272.2,1229v-10.2M293.9,840v4.8M293.9,1229v-4.8M315.6,840v4.8M315.6,1229v-4.8M337.4,840v4.8M337.4,1229v-4.8M359.1,840v4.8M359.1,1229v-4.8M380.8,840v10.2M380.8,1229v-10.2M402.5,840v4.8M402.5,1229v-4.8M424.2,840v4.8M424.2,1229v-4.8M446.0,840v4.8M446.0,1229v-4.8M467.7,840v4.8M467.7,1229v-4.8M489.4,840v10.2M489.4,1229v-10.2M511.1,840v4.8M511.1,1229v-4.8M532.8,840v4.8M532.8,1229v-4.8M554.6,840v4.8M554.6,1229v-4.8M576.3,840v4.8M576.3,1229v-4.8M598.0,840v10.2M598.0,1229v-10.2M619.7,840v4.8M619.7,1229v-4.8M641.4,840v4.8M641.4,1229v-4.8M663.2,840v4.8M663.2,1229v-4.8M684.9,840v4.8M684.9,1229v-4.8M706.6,840v10.2M706.6,1229v-10.2M728.3,840v4.8M728.3,1229v-4.8M750.0,840v4.8M750.0,1229v-4.8M771.8,840v4.8M771.8,1229v-4.8M793.5,840v4.8M793.5,1229v-4.8M815.2,840v10.2M815.2,1229v-10.2M836.9,840v4.8M836.9,1229v-4.8M858.6,840v4.8M858.6,1229v-4.8M880.4,840v4.8M880.4,1229v-4.8M902.1,840v4.8M902.1,1229v-4.8M923.8,840v10.2M923.8,1229v-10.2M945.5,840v4.8M945.5,1229v-4.8M967.2,840v4.8M967.2,1229v-4.8M989.0,840v4.8M989.0,1229v-4.8M1010.7,840v4.8M1010.7,1229v-4.8M1032.4,840v10.2M1032.4,1229v-10.2M1054.1,840v4.8M1054.1,1229v-4.8M1075.8,840v4.8M1075.8,1229v-4.8M1097.6,840v4.8M1097.6,1229v-4.8M1119.3,840v4.8M1119.3,1229v-4.8M1141.0,840v10.2M1141.0,1229v-10.2M55,845.0h10.2M1141,845.0h-10.2M55,913.2h10.2M1141,913.2h-10.2M55,981.4h10.2M1141,981.4h-10.2M55,1049.6h10.2M1141,1049.6h-10.2M55,1117.8h10.2M1141,1117.8h-10.2M55,1186.0h10.2M1141,1186.0h-10.2M55,879.1h4.8M1141,879.1h-4.8M55,947.3h4.8M1141,947.3h-4.8M55,1015.5h4.8M1141,1015.5h-4.8M55,1083.7h4.8M1141,1083.7h-4.8M55,1151.9h4.8M1141,1151.9h-4.8M55,1220.1h4.8M1141,1220.1h-4.8" stroke="#d2d2d2" stroke-width="1.7" fill="none"/><rect x="55" y="840" width="1086" height="389" fill="none" stroke="#d2d2d2" stroke-width="2"/><text transform="translate(55.0,1250.0) scale(0.92,1)" font-size="20" text-anchor="middle" fill="#dcdcdc">0</text><text transform="translate(163.6,1250.0) scale(0.92,1)" font-size="20" text-anchor="middle" fill="#dcdcdc">1</text><text transform="translate(272.2,1250.0) scale(0.92,1)" font-size="20" text-anchor="middle" fill="#dcdcdc">2</text><text transform="translate(380.8,1250.0) scale(0.92,1)" font-size="20" text-anchor="middle" fill="#dcdcdc">3</text><text transform="translate(489.4,1250.0) scale(0.92,1)" font-size="20" text-anchor="middle" fill="#dcdcdc">4</text><text transform="translate(598.0,1250.0) scale(0.92,1)" font-size="20" text-anchor="middle" fill="#dcdcdc">5</text><text transform="translate(706.6,1250.0) scale(0.92,1)" font-size="20" text-anchor="middle" fill="#dcdcdc">6</text><text transform="translate(815.2,1250.0) scale(0.92,1)" font-size="20" text-anchor="middle" fill="#dcdcdc">7</text><text transform="translate(923.8,1250.0) scale(0.92,1)" font-size="20" text-anchor="middle" fill="#dcdcdc">8</text><text transform="translate(1032.4,1250.0) scale(0.92,1)" font-size="20" text-anchor="middle" fill="#dcdcdc">9</text><text transform="translate(1141.0,1250.0) scale(0.92,1)" font-size="20" text-anchor="middle" fill="#dcdcdc">10</text><text transform="translate(49.5,850.7) scale(0.92,1)" font-size="20" text-anchor="end" fill="#dcdcdc">100</text><text transform="translate(49.5,918.9) scale(0.92,1)" font-size="20" text-anchor="end" fill="#dcdcdc">80</text><text transform="translate(49.5,987.1) scale(0.92,1)" font-size="20" text-anchor="end" fill="#dcdcdc">60</text><text transform="translate(49.5,1055.3) scale(0.92,1)" font-size="20" text-anchor="end" fill="#dcdcdc">40</text><text transform="translate(49.5,1123.5) scale(0.92,1)" font-size="20" text-anchor="end" fill="#dcdcdc">20</text><text transform="translate(49.5,1191.7) scale(0.92,1)" font-size="20" text-anchor="end" fill="#dcdcdc">0</text><text transform="translate(598.0,831.6) scale(0.92,1)" font-size="22" text-anchor="middle" fill="#dcdcdc">Euler Angles</text></svg>
<svg class="b" style="left:1161px;top:250px" width="1171" height="1028.8" viewBox="1161 250 1171 1028.8"><rect x="1201" y="287" width="1109.5" height="943" fill="#121212"/><path d="M1312.0,287V1230M1422.9,287V1230M1533.8,287V1230M1644.8,287V1230M1755.8,287V1230M1866.7,287V1230M1977.7,287V1230M2088.6,287V1230M2199.6,287V1230M1201,364.3H2310.5M1201,460.8H2310.5M1201,557.2H2310.5M1201,653.6H2310.5M1201,750.1H2310.5M1201,846.5H2310.5M1201,943.0H2310.5M1201,1039.5H2310.5M1201,1135.9H2310.5" stroke="#424242" stroke-width="1.9" fill="none"/><clipPath id="c1201_287"><rect x="1201" y="287" width="1109.5" height="943"/></clipPath><clipPath id="c1201_287m"><rect x="1200" y="286" width="1111.5" height="945"/></clipPath><g clip-path="url(#c1201_287)"><path d="M1201.0,943.0 1556.6,634.0 1563.8,628.1 1570.2,623.1 1575.7,619.1 1581.0,615.7 1586.0,613.0 1590.4,610.9 1594.9,609.4 1599.0,608.5 1603.7,608.2 1608.5,608.8 1612.9,610.2 1617.1,612.4 1621.2,615.6 1625.4,619.8 1629.3,624.8 1633.2,630.8 1635.9,635.8 1638.4,640.8 1643.4,652.4 1650.6,671.8 1668.1,720.6 1675.6,740.7 1684.7,763.5 1689.2,773.7 1693.3,782.6 1698.1,792.0 1702.8,800.4 1707.2,807.5 1711.6,813.8 1716.1,819.1 1720.5,823.6 1725.0,827.1 1729.4,829.6 1732.5,830.8 1735.2,831.5 1738.3,831.8 1741.0,831.6 1744.1,831.0 1746.9,830.1 1749.9,828.6 1752.7,826.8 1755.8,824.4 1882.0,714.7 1893.3,705.0 1901.9,698.0 1908.3,693.1 1913.9,689.2 1919.1,685.9 1924.1,683.2 1928.6,681.2 1933.0,679.6 1937.2,678.7 1941.3,678.3 1944.9,678.4 1948.5,679.0 1951.9,680.0 1955.2,681.5 1958.5,683.6 1961.6,686.0 1964.9,689.2 1967.9,692.7 1972.9,699.7 1977.7,707.9 1984.9,721.9 2002.9,758.3 2012.3,776.2 2020.1,789.7 2027.3,800.9 2031.5,806.7 2035.6,811.9 2038.7,815.0 2041.7,817.3 2045.1,818.8 2048.1,819.4 2049.8,819.4 2051.4,819.2 2054.5,818.0 2058.1,815.7 2061.7,812.1 2065.3,807.4 2069.2,801.1 2072.8,794.0 2076.7,785.1 2080.3,775.7 2084.2,764.3 2087.8,752.6 2091.9,738.1 2101.6,701.7 2111.1,663.9 2133.0,573.1 2139.1,549.1 2144.4,529.6 2149.3,512.9 2154.3,498.6 2159.6,486.1 2162.4,480.5 2165.2,475.4 2167.7,471.4 2170.4,467.4 2173.2,463.9 2176.0,460.8 2178.7,458.1 2181.8,455.6 2184.8,453.5 2188.2,451.7 2193.7,449.3 2199.8,447.5 2205.7,446.4 2221.5,443.8 2226.2,442.8 2230.3,441.7 2234.8,440.1 2239.2,438.3 2243.7,436.0 2247.8,433.4 2252.0,430.5 2256.1,427.1 2310.5,379.9" stroke="#fbe55c" stroke-width="5.0" fill="none" stroke-linejoin="round"/><path d="M1201.0,943.0 1866.7,943.0 1872.0,942.6 1877.2,941.5 1880.3,940.4 1883.3,939.1 1886.4,937.5 1889.4,935.6 1892.5,933.4 1895.5,930.9 1901.4,925.2 1907.2,918.4 1913.0,910.4 1918.8,901.2 1924.7,890.7 1930.5,879.0 1936.6,865.5 1942.7,850.7 1949.1,833.8 1955.5,815.8 1962.1,795.7 1969.3,773.0 1979.6,739.6 1984.0,726.1 1990.7,707.7 1997.6,691.0 2002.6,680.4 2007.6,670.9 2012.6,662.5 2017.9,654.6 2023.4,647.4 2029.0,641.1 2034.8,635.5 2040.9,630.4 2046.2,626.7 2051.7,623.3 2057.5,620.1 2063.4,617.5 2069.2,615.2 2075.0,613.4 2080.6,612.2 2085.5,611.6 2310.5,611.5" stroke="#1f88e0" stroke-width="5.0" fill="none" stroke-linejoin="round"/><path d="M1201.0,943.0 1534.1,943.0 1537.2,942.8 1540.2,942.2 1543.3,941.3 1546.3,940.1 1549.1,938.6 1551.9,936.8 1554.7,934.7 1557.4,932.3 1563.0,926.5 1568.5,919.4 1574.1,911.0 1579.3,901.7 1584.9,890.6 1590.2,878.7 1596.0,864.1 1602.1,847.3 1608.2,828.8 1614.6,807.9 1620.9,785.5 1627.9,759.7 1635.1,731.6 1646.2,687.2 1650.3,671.4 1657.0,648.8 1660.3,638.6 1663.9,628.3 1668.9,615.5 1673.9,604.1 1679.2,593.5 1684.7,583.9 1690.3,575.6 1696.1,568.1 1702.2,561.6 1708.6,556.0 1713.6,552.3 1718.6,549.2 1723.9,546.5 1729.1,544.2 1734.9,542.2 1740.8,540.8 1746.6,539.8 1752.4,539.2 2034.8,539.2 2040.1,539.4 2045.6,540.1 2051.4,541.4 2057.3,543.2 2062.8,545.5 2068.1,548.3 2073.1,551.7 2077.8,555.5 2082.2,559.7 2086.4,564.5 2090.5,570.0 2094.4,575.9 2098.3,582.7 2102.2,590.4 2105.8,598.4 2109.4,607.3 2113.0,617.2 2116.3,627.2 2121.6,644.9 2126.6,663.9 2131.6,685.3 2136.3,707.6 2143.0,743.0 2157.4,827.3 2167.4,882.9 2176.8,931.6 2186.0,974.5 2190.4,993.6 2194.8,1011.5 2199.3,1028.2 2203.7,1043.7 2208.1,1058.0 2212.6,1071.1 2217.0,1082.9 2221.5,1093.5 2225.1,1101.1 2228.7,1108.0 2232.3,1114.1 2235.6,1118.9 2239.2,1123.4 2242.8,1127.0 2246.4,1129.8 2249.8,1131.7 2253.1,1132.8 2256.1,1133.2 2310.5,1133.2" stroke="#f47a21" stroke-width="5.0" fill="none" stroke-linejoin="round"/></g><path d="M1201.0,287v10.2M1201.0,1230v-10.2M1223.2,287v4.8M1223.2,1230v-4.8M1245.4,287v4.8M1245.4,1230v-4.8M1267.6,287v4.8M1267.6,1230v-4.8M1289.8,287v4.8M1289.8,1230v-4.8M1312.0,287v10.2M1312.0,1230v-10.2M1334.1,287v4.8M1334.1,1230v-4.8M1356.3,287v4.8M1356.3,1230v-4.8M1378.5,287v4.8M1378.5,1230v-4.8M1400.7,287v4.8M1400.7,1230v-4.8M1422.9,287v10.2M1422.9,1230v-10.2M1445.1,287v4.8M1445.1,1230v-4.8M1467.3,287v4.8M1467.3,1230v-4.8M1489.5,287v4.8M1489.5,1230v-4.8M1511.7,287v4.8M1511.7,1230v-4.8M1533.8,287v10.2M1533.8,1230v-10.2M1556.0,287v4.8M1556.0,1230v-4.8M1578.2,287v4.8M1578.2,1230v-4.8M1600.4,287v4.8M1600.4,1230v-4.8M1622.6,287v4.8M1622.6,1230v-4.8M1644.8,287v10.2M1644.8,1230v-10.2M1667.0,287v4.8M1667.0,1230v-4.8M1689.2,287v4.8M1689.2,1230v-4.8M1711.4,287v4.8M1711.4,1230v-4.8M1733.6,287v4.8M1733.6,1230v-4.8M1755.8,287v10.2M1755.8,1230v-10.2M1777.9,287v4.8M1777.9,1230v-4.8M1800.1,287v4.8M1800.1,1230v-4.8M1822.3,287v4.8M1822.3,1230v-4.8M1844.5,287v4.8M1844.5,1230v-4.8M1866.7,287v10.2M1866.7,1230v-10.2M1888.9,287v4.8M1888.9,1230v-4.8M1911.1,287v4.8M1911.1,1230v-4.8M1933.3,287v4.8M1933.3,1230v-4.8M1955.5,287v4.8M1955.5,1230v-4.8M1977.7,287v10.2M1977.7,1230v-10.2M1999.8,287v4.8M1999.8,1230v-4.8M2022.0,287v4.8M2022.0,1230v-4.8M2044.2,287v4.8M2044.2,1230v-4.8M2066.4,287v4.8M2066.4,1230v-4.8M2088.6,287v10.2M2088.6,1230v-10.2M2110.8,287v4.8M2110.8,1230v-4.8M2133.0,287v4.8M2133.0,1230v-4.8M2155.2,287v4.8M2155.2,1230v-4.8M2177.4,287v4.8M2177.4,1230v-4.8M2199.6,287v10.2M2199.6,1230v-10.2M2221.7,287v4.8M2221.7,1230v-4.8M2243.9,287v4.8M2243.9,1230v-4.8M2266.1,287v4.8M2266.1,1230v-4.8M2288.3,287v4.8M2288.3,1230v-4.8M2310.5,287v10.2M2310.5,1230v-10.2M1201,364.3h10.2M2310.5,364.3h-10.2M1201,460.8h10.2M2310.5,460.8h-10.2M1201,557.2h10.2M2310.5,557.2h-10.2M1201,653.6h10.2M2310.5,653.6h-10.2M1201,750.1h10.2M2310.5,750.1h-10.2M1201,846.5h10.2M2310.5,846.5h-10.2M1201,943.0h10.2M2310.5,943.0h-10.2M1201,1039.5h10.2M2310.5,1039.5h-10.2M1201,1135.9h10.2M2310.5,1135.9h-10.2M1201,316.1h4.8M2310.5,316.1h-4.8M1201,412.5h4.8M2310.5,412.5h-4.8M1201,509.0h4.8M2310.5,509.0h-4.8M1201,605.4h4.8M2310.5,605.4h-4.8M1201,701.9h4.8M2310.5,701.9h-4.8M1201,798.3h4.8M2310.5,798.3h-4.8M1201,894.8h4.8M2310.5,894.8h-4.8M1201,991.2h4.8M2310.5,991.2h-4.8M1201,1087.7h4.8M2310.5,1087.7h-4.8M1201,1184.1h4.8M2310.5,1184.1h-4.8" stroke="#d2d2d2" stroke-width="1.7" fill="none"/><rect x="1201" y="287" width="1109.5" height="943" fill="none" stroke="#d2d2d2" stroke-width="2"/><text transform="translate(1201.0,1251.0) scale(0.92,1)" font-size="20" text-anchor="middle" fill="#dcdcdc">0</text><text transform="translate(1312.0,1251.0) scale(0.92,1)" font-size="20" text-anchor="middle" fill="#dcdcdc">1</text><text transform="translate(1422.9,1251.0) scale(0.92,1)" font-size="20" text-anchor="middle" fill="#dcdcdc">2</text><text transform="translate(1533.8,1251.0) scale(0.92,1)" font-size="20" text-anchor="middle" fill="#dcdcdc">3</text><text transform="translate(1644.8,1251.0) scale(0.92,1)" font-size="20" text-anchor="middle" fill="#dcdcdc">4</text><text transform="translate(1755.8,1251.0) scale(0.92,1)" font-size="20" text-anchor="middle" fill="#dcdcdc">5</text><text transform="translate(1866.7,1251.0) scale(0.92,1)" font-size="20" text-anchor="middle" fill="#dcdcdc">6</text><text transform="translate(1977.7,1251.0) scale(0.92,1)" font-size="20" text-anchor="middle" fill="#dcdcdc">7</text><text transform="translate(2088.6,1251.0) scale(0.92,1)" font-size="20" text-anchor="middle" fill="#dcdcdc">8</text><text transform="translate(2199.6,1251.0) scale(0.92,1)" font-size="20" text-anchor="middle" fill="#dcdcdc">9</text><text transform="translate(2310.5,1251.0) scale(0.92,1)" font-size="20" text-anchor="middle" fill="#dcdcdc">10</text><text transform="translate(1195.5,370.0) scale(0.92,1)" font-size="20" text-anchor="end" fill="#dcdcdc">6</text><text transform="translate(1195.5,466.4) scale(0.92,1)" font-size="20" text-anchor="end" fill="#dcdcdc">5</text><text transform="translate(1195.5,562.9) scale(0.92,1)" font-size="20" text-anchor="end" fill="#dcdcdc">4</text><text transform="translate(1195.5,659.4) scale(0.92,1)" font-size="20" text-anchor="end" fill="#dcdcdc">3</text><text transform="translate(1195.5,755.8) scale(0.92,1)" font-size="20" text-anchor="end" fill="#dcdcdc">2</text><text transform="translate(1195.5,852.2) scale(0.92,1)" font-size="20" text-anchor="end" fill="#dcdcdc">1</text><text transform="translate(1195.5,948.7) scale(0.92,1)" font-size="20" text-anchor="end" fill="#dcdcdc">0</text><text transform="translate(1195.5,1045.2) scale(0.92,1)" font-size="20" text-anchor="end" fill="#dcdcdc">-1</text><text transform="translate(1195.5,1141.6) scale(0.92,1)" font-size="20" text-anchor="end" fill="#dcdcdc">-2</text><text transform="translate(1755.8,278.6) scale(0.92,1)" font-size="22" text-anchor="middle" fill="#dcdcdc">Velocity in Body Axes</text><path d="M1201.2,286V1231" stroke="#fbe55c" stroke-width="1.9"/>
<path d="M1201,722.9H1648.6" stroke="#d2be4a" stroke-width="1.6"/>
<path d="M1648.6,287V1230" stroke="#000" stroke-width="2.0"/>
<path d="M1648.6,287V1230" stroke="#fbe55c" stroke-width="2.4" stroke-dasharray="14.9 2.15" stroke-dashoffset="2.1"/>
<rect x="1361" y="699" width="134.6" height="47.4" fill="#111" stroke="#d8c44e" stroke-width="1.8"/>
<text transform="translate(1366.5,718.5) scale(0.905,1)" font-size="20" fill="#fff">Δsecs: 4.0367</text>
<text transform="translate(1366.5,739.6) scale(0.905,1)" font-size="20" fill="#fff">ΔValue: 2.8502</text><g clip-path="url(#c1201_287m)"><pattern id="hz" width="2" height="2" patternUnits="userSpaceOnUse"><rect width="2" height="2" fill="#8d8132"/><rect width="1" height="1" fill="#b9a940"/><rect x="1" y="1" width="1" height="1" fill="#a39538"/></pattern><circle cx="1201.2" cy="943" r="8.6" fill="url(#hz)" stroke="#fbe55c" stroke-width="2"/>
<circle cx="1648.6" cy="668.1" r="8.8" fill="url(#hz)" stroke="#fbe55c" stroke-width="2"/></g></svg>
</body></html>
